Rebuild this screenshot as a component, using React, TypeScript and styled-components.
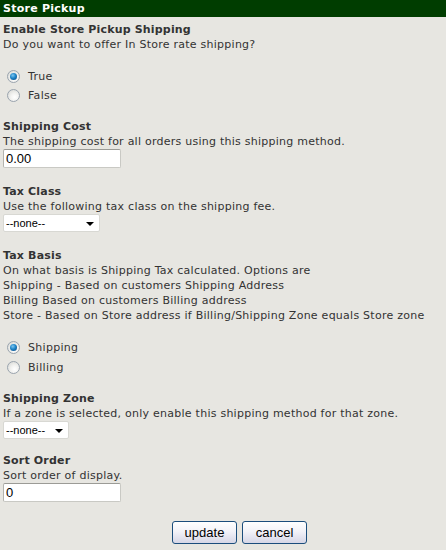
import React from "react";
import styled, { createGlobalStyle } from "styled-components";

const Global = createGlobalStyle`
  html, body { margin: 0; padding: 0; background: #e7e6e1; }
  body { font-family: "DejaVu Sans", Verdana, sans-serif; font-size: 11px; color: #333; }
`;

const Page = styled.div`
  width: 446px;
  min-height: 550px;
  background: #e7e6e1;
`;

const Header = styled.div`
  height: 17px;
  line-height: 17px;
  background: #003d00;
  color: #fff;
  font-weight: bold;
  letter-spacing: 0.25px;
  padding-left: 3px;
`;

const Form = styled.div`
  padding: 5px 3px 0 3px;
  display: flex;
  flex-direction: column;
`;

const Field = styled.div<{ $after?: number }>`
  display: flex;
  flex-direction: column;
  align-items: flex-start;
  margin-bottom: ${(p) => p.$after ?? 15}px;
`;

const Title = styled.div`
  font-weight: bold;
  line-height: 15px;
  letter-spacing: 0.17px;
`;

const Desc = styled.div`
  line-height: 15px;
  letter-spacing: 0.25px;
`;

const RadioGroup = styled.div<{ $top: number }>`
  display: flex;
  flex-direction: column;
  margin-top: ${(p) => p.$top}px;
`;

const RadioRow = styled.label<{ $h: number }>`
  display: flex;
  align-items: center;
  height: ${(p) => p.$h}px;
  gap: 8px;
  padding-left: 4px;
  letter-spacing: 0.3px;
`;

const RadioDot = styled.span<{ $on?: boolean }>`
  width: 11px;
  height: 11px;
  border-radius: 50%;
  border: 1px solid #9aa4ae;
  background: radial-gradient(circle at 60% 65%, #ffffff 0%, #f2f2f0 40%, #d2d3cf 100%);
  position: relative;
  box-sizing: content-box;
  &::after {
    content: "";
    display: ${(p) => (p.$on ? "block" : "none")};
    position: absolute;
    left: 2px;
    top: 2px;
    width: 7px;
    height: 7px;
    border-radius: 50%;
    background: radial-gradient(circle at 40% 35%, #7fc6ef 0%, #1d84c8 45%, #0a3f78 100%);
  }
`;

const TextBox = styled.input`
  width: 118px;
  height: 19px;
  box-sizing: border-box;
  border: 1px solid #c9c9c4;
  border-top-color: #9b9b96;
  border-left-color: #b3b3ae;
  border-radius: 2px;
  background: #fff;
  font-family: "Liberation Sans", Arial, sans-serif;
  font-size: 13px;
  color: #000;
  padding: 0 2px;
  outline: none;
`;

const SelectWrap = styled.div<{ $w: number }>`
  position: relative;
  width: ${(p) => p.$w}px;
  height: 18px;
  &::after {
    content: "";
    position: absolute;
    right: 6px;
    top: 8px;
    border-left: 4px solid transparent;
    border-right: 4px solid transparent;
    border-top: 4px solid #000;
    pointer-events: none;
  }
`;

const Select = styled.select`
  appearance: none;
  -webkit-appearance: none;
  width: 100%;
  height: 18px;
  box-sizing: border-box;
  border: 1px solid #d8d8d3;
  border-radius: 2px;
  background: #fff;
  font-family: "Liberation Sans", Arial, sans-serif;
  font-size: 11px;
  color: #000;
  padding: 0 0 0 2px;
  outline: none;
`;

const Buttons = styled.div`
  display: flex;
  gap: 5px;
  padding-left: 169px;
  margin-top: 4px;
`;

const Button = styled.button`
  width: 65px;
  height: 23px;
  border: 1px solid #1b4d7c;
  border-radius: 3px;
  background: linear-gradient(to bottom, #ffffff 0%, #f2f2f8 45%, #d6d6e6 100%);
  font-family: "Liberation Sans", Arial, sans-serif;
  font-size: 13px;
  color: #000;
  padding: 0;
`;

export default function App() {
  return (
    <Page>
      <Global />
      <Header>Store Pickup</Header>
      <Form>
        <Field $after={14}>
          <Title>Enable Store Pickup Shipping</Title>
          <Desc>Do you want to offer In Store rate shipping?</Desc>
          <RadioGroup $top={15}>
            <RadioRow $h={19}>
              <RadioDot $on />
              True
            </RadioRow>
            <RadioRow $h={19}>
              <RadioDot />
              False
            </RadioRow>
          </RadioGroup>
        </Field>
        <Field $after={16}>
          <Title>Shipping Cost</Title>
          <Desc>The shipping cost for all orders using this shipping method.</Desc>
          <TextBox defaultValue="0.00" />
        </Field>
        <Field $after={16}>
          <Title>Tax Class</Title>
          <Desc>Use the following tax class on the shipping fee.</Desc>
          <SelectWrap $w={97}>
            <Select defaultValue="none">
              <option value="none">--none--</option>
            </Select>
          </SelectWrap>
        </Field>
        <Field $after={14}>
          <Title>Tax Basis</Title>
          <Desc>On what basis is Shipping Tax calculated. Options are</Desc>
          <Desc>Shipping - Based on customers Shipping Address</Desc>
          <Desc>Billing Based on customers Billing address</Desc>
          <Desc>Store - Based on Store address if Billing/Shipping Zone equals Store zone</Desc>
          <RadioGroup $top={14}>
            <RadioRow $h={20}>
              <RadioDot $on />
              Shipping
            </RadioRow>
            <RadioRow $h={20}>
              <RadioDot />
              Billing
            </RadioRow>
          </RadioGroup>
        </Field>
        <Field $after={14}>
          <Title>Shipping Zone</Title>
          <Desc>If a zone is selected, only enable this shipping method for that zone.</Desc>
          <SelectWrap $w={66}>
            <Select defaultValue="none">
              <option value="none">--none--</option>
            </Select>
          </SelectWrap>
        </Field>
        <Field $after={15}>
          <Title>Sort Order</Title>
          <Desc>Sort order of display.</Desc>
          <TextBox defaultValue="0" />
        </Field>
        <Buttons>
          <Button>update</Button>
          <Button>cancel</Button>
        </Buttons>
      </Form>
    </Page>
  );
}
